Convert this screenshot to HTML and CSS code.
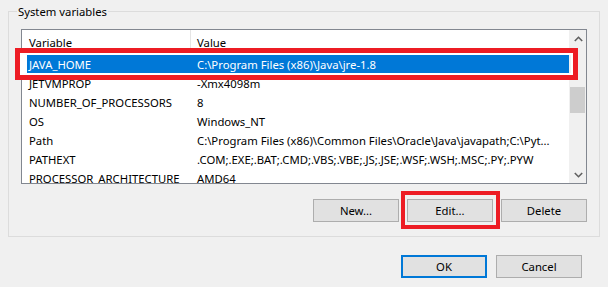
FILE: index.html
```html
<!DOCTYPE html>
<html lang="en">
<head>
<meta charset="utf-8">
<title>System variables</title>
<link rel="stylesheet" href="styles.css">
</head>
<body>
<div class="group">
  <div class="group-title">System variables</div>
  <div class="listbox">
    <div class="list-main">
      <div class="list-header">
        <div class="hcell hcell-var">Variable</div>
        <div class="hcell hcell-val">Value</div>
      </div>
      <div class="row selected"><span class="c1">JAVA_HOME</span><span class="c2">C:\Program Files (x86)\Java\jre-1.8</span></div>
      <div class="row"><span class="c1">JETVMPROP</span><span class="c2">-Xmx4098m</span></div>
      <div class="row"><span class="c1">NUMBER_OF_PROCESSORS</span><span class="c2">8</span></div>
      <div class="row"><span class="c1">OS</span><span class="c2">Windows_NT</span></div>
      <div class="row"><span class="c1">Path</span><span class="c2">C:\Program Files (x86)\Common Files\Oracle\Java\javapath;C:\Pyt...</span></div>
      <div class="row"><span class="c1">PATHEXT</span><span class="c2">.COM;.EXE;.BAT;.CMD;.VBS;.VBE;.JS;.JSE;.WSF;.WSH;.MSC;.PY;.PYW</span></div>
      <div class="row"><span class="c1">PROCESSOR_ARCHITECTURE</span><span class="c2">AMD64</span></div>
    </div>
    <div class="scrollbar">
      <div class="sb-arrow">
        <svg width="9" height="6" viewBox="0 0 9 6"><polyline points="0.8,5 4.5,1.3 8.2,5" fill="none" stroke="#606060" stroke-width="1.6"/></svg>
      </div>
      <div class="sb-track">
        <div class="sb-thumb"></div>
      </div>
      <div class="sb-arrow">
        <svg width="9" height="6" viewBox="0 0 9 6"><polyline points="0.8,1 4.5,4.7 8.2,1" fill="none" stroke="#606060" stroke-width="1.6"/></svg>
      </div>
    </div>
    <div class="mark mark-row"></div>
  </div>
  <div class="btn-row">
    <button class="btn">New...</button>
    <span class="annot"><button class="btn">Edit...</button><span class="mark mark-btn"></span></span>
    <button class="btn">Delete</button>
  </div>
</div>
<div class="dialog-buttons">
  <button class="btn btn-default">OK</button>
  <button class="btn">Cancel</button>
</div>
</body>
</html>
```
FILE: styles.css
```css
* { box-sizing: border-box; }
html, body {
  margin: 0;
  padding: 0;
  background: #f0f0f0;
}
body {
  width: 608px;
  height: 287px;
  overflow: hidden;
  font-family: "Noto Sans", "Open Sans", sans-serif;
  font-size: 11.3px;
  color: #000;
  padding-top: 11px;
  padding-left: 8px;
}
.group {
  width: 592px;
  border: 1px solid #dcdcdc;
  padding: 0 12px 14px 12px;
}
.group-title {
  margin-top: -8px;
  margin-left: -4px;
  width: fit-content;
  padding: 0 1px;
  line-height: 16px;
  height: 16px;
  background: #f0f0f0;
}
.listbox {
  position: relative;
  margin-top: 9px;
  width: 566px;
  height: 155px;
  border: 1px solid #828790;
  background: #fff;
  display: flex;
}
.list-main {
  flex: 1;
  overflow: hidden;
  white-space: nowrap;
}
.list-header {
  display: flex;
  height: 25px;
  align-items: stretch;
}
.hcell {
  display: flex;
  align-items: center;
  padding-bottom: 1px;
}
.hcell-var {
  width: 169px;
  padding-left: 7px;
  border-right: 1px solid #e5e5e5;
}
.hcell-val {
  padding-left: 6px;
}
.row {
  display: flex;
  height: 19px;
  line-height: 19px;
  margin-left: 5px;
  padding-left: 2px;
}
.row .c1 { width: 168px; flex: none; }
.row .c2 { flex: none; }
.row.selected {
  background: #0078d7;
  color: #fff;
}
.scrollbar {
  width: 17px;
  flex: none;
  background: #f0f0f0;
  display: flex;
  flex-direction: column;
}
.sb-arrow {
  height: 17px;
  display: flex;
  align-items: center;
  justify-content: center;
  padding-left: 1px;
}
.sb-track {
  flex: 1;
  padding: 40px 1px 0 1px;
}
.sb-thumb {
  height: 26px;
  background: #cdcdcd;
}
.mark {
  position: absolute;
  border: 5px solid #ed1c24;
  pointer-events: none;
}
.mark-row {
  left: -7px;
  top: 18px;
  width: 563px;
  height: 32px;
  box-shadow: inset 0 0 0 2px #fff;
}
.btn-row {
  display: flex;
  justify-content: flex-end;
  gap: 8px;
  margin-top: 15px;
}
.btn {
  width: 86px;
  height: 23px;
  border: 1px solid #adadad;
  background: #e1e1e1;
  font-family: inherit;
  font-size: 11.3px;
  color: #000;
  padding: 0;
  margin: 0;
}
.annot {
  position: relative;
  display: block;
  height: 23px;
}
.mark-btn {
  border-width: 4px;
  left: -6px;
  top: -8px;
  width: 99px;
  height: 38px;
}
.dialog-buttons {
  display: flex;
  justify-content: flex-end;
  gap: 9px;
  margin-top: 18px;
  width: 574px;
}
.btn-default {
  border: 2px solid #0078d7;
}
```
